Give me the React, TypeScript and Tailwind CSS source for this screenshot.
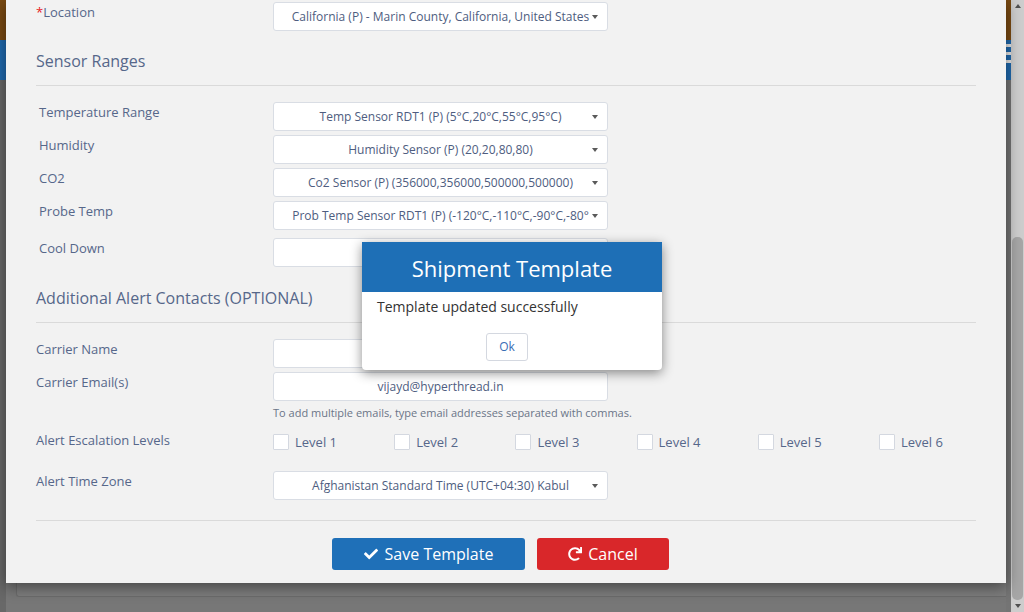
import React from "react";
import { FaCheck, FaRedo } from "react-icons/fa";

const labelCls = "text-[13px] leading-[18px] text-[#56678a]";

function Caret() {
  return (
    <span className="ml-[2px] mr-[9px] h-0 w-0 shrink-0 border-x-[3.5px] border-t-[4px] border-x-transparent border-t-[#5a5a5a]" />
  );
}

function Select({ text }: { text: string }) {
  return (
    <div className="flex h-[29px] w-[335px] shrink-0 items-center rounded-[3px] border border-[#d9dde4] bg-white pl-[17px]">
      <span className="min-w-0 flex-1 overflow-hidden whitespace-nowrap text-center text-[12px] leading-[16px] text-[#4e5d80]">
        {text}
      </span>
      <Caret />
    </div>
  );
}

function Input({ text }: { text?: string }) {
  return (
    <div className="flex h-[29px] w-[335px] shrink-0 items-center justify-center rounded-[3px] border border-[#d9dde4] bg-white text-[12px] text-[#4e5d80]">
      {text}
    </div>
  );
}

function Row({
  label,
  indent,
  className,
  children,
}: {
  label: React.ReactNode;
  indent?: boolean;
  className?: string;
  children: React.ReactNode;
}) {
  return (
    <div className={"flex " + (className ?? "")}>
      <div className={"w-[237px] shrink-0 pt-[1px] " + labelCls + (indent ? " pl-[3px]" : "")}>{label}</div>
      {children}
    </div>
  );
}

function Heading({ children, className }: { children: React.ReactNode; className: string }) {
  return <div className={"text-[16px] leading-[24px] text-[#56678a] " + className}>{children}</div>;
}

export default function App() {
  const levels = ["Level 1", "Level 2", "Level 3", "Level 4", "Level 5", "Level 6"];
  return (
    <div className="relative h-[612px] w-[1024px] overflow-hidden bg-[#777777] font-['Open_Sans',sans-serif]">
      <div className="flex h-[612px]">
        {/* left strip of underlying page */}
        <div className="flex w-[6px] shrink-0 flex-col">
          <div className="h-[40px] bg-[#7a4a12]" />
          <div className="h-[40px] bg-[#1f69ae]" />
          <div className="flex-1 bg-[#686868]" />
        </div>

        {/* modal column */}
        <div className="flex w-[1000px] shrink-0 flex-col">
          <div className="relative z-10 flex h-[583px] flex-col bg-[#f2f2f2] px-[30px] shadow-[0_4px_14px_rgba(0,0,0,0.45)]">
            <Row
              className="mt-[2px]"
              label={
                <span>
                  <span className="text-[#e8201e]">*</span>Location
                </span>
              }
            >
              <Select text="California (P) - Marin County, California, United States" />
            </Row>

            <Heading className="mt-[18px]">Sensor Ranges</Heading>
            <div className="mt-[12px] h-px bg-[#dadada]" />

            <div className="mt-[16px] flex flex-col gap-[4px]">
              <Row indent label="Temperature Range">
                <Select text="Temp Sensor RDT1 (P) (5°C,20°C,55°C,95°C)" />
              </Row>
              <Row indent label="Humidity">
                <Select text="Humidity Sensor (P) (20,20,80,80)" />
              </Row>
              <Row indent label="CO2">
                <Select text="Co2 Sensor (P) (356000,356000,500000,500000)" />
              </Row>
              <Row indent label="Probe Temp">
                <Select text="Prob Temp Sensor RDT1 (P) (-120°C,-110°C,-90°C,-80°" />
              </Row>
            </div>
            <Row indent className="mt-[8px]" label="Cool Down">
              <Input />
            </Row>

            <Heading className="mt-[19px]">Additional Alert Contacts (OPTIONAL)</Heading>
            <div className="mt-[12px] h-px bg-[#dadada]" />

            <div className="mt-[16px] flex flex-col gap-[4px]">
              <Row label="Carrier Name">
                <Input />
              </Row>
              <Row label="Carrier Email(s)">
                <Input text="vijayd@hyperthread.in" />
              </Row>
            </div>
            <div className="ml-[237px] mt-[4px] text-[11px] leading-[16px] text-[#6b7588]">
              To add multiple emails, type email addresses separated with commas.
            </div>

            <div className="mt-[10px] flex">
              <div className={"w-[237px] shrink-0 " + labelCls}>Alert Escalation Levels</div>
              <div className="flex shrink-0 pt-[3px]">
                {levels.map((l) => (
                  <div key={l} className="flex w-[121.2px] shrink-0 items-center gap-[6px]">
                    <div className="h-[16px] w-[16px] rounded-[1px] border border-[#d4d8e0] bg-white" />
                    <span className="text-[13px] leading-[16px] text-[#56678a]">{l}</span>
                  </div>
                ))}
              </div>
            </div>

            <Row className="mt-[21px]" label="Alert Time Zone">
              <Select text="Afghanistan Standard Time (UTC+04:30) Kabul" />
            </Row>

            <div className="mt-[20px] h-px bg-[#dadada]" />

            <div className="mt-[17px] flex gap-[12px] pl-[296px]">
              <div className="flex h-[32px] w-[193px] items-center justify-center gap-[7px] rounded-[3px] bg-[#1f70b8] text-[16px] text-white">
                <FaCheck className="h-[14px] w-[14px]" />
                <span>Save Template</span>
              </div>
              <div className="flex h-[32px] w-[132px] items-center justify-center gap-[6px] rounded-[3px] bg-[#d9272a] text-[16px] text-white">
                <FaRedo className="h-[14px] w-[14px]" />
                <span>Cancel</span>
              </div>
            </div>
          </div>
          {/* underlying page panel below modal */}
          <div className="flex-1">
            <div className="ml-[10px] h-[14px] rounded-bl-[3px] border-b border-l border-[#6c6c6c] bg-[#7d7d7d]" />
          </div>
        </div>

        {/* right strip of underlying page */}
        <div className="flex w-[5px] shrink-0 flex-col">
          <div className="h-[40px] bg-[#7a4a12]" />
          <div className="flex h-[40px] flex-col gap-[5px] bg-[#1f69ae] pt-[4px]">
            <div className="h-[3px] bg-[#e6e6e6]" />
            <div className="h-[3px] bg-[#e6e6e6]" />
            <div className="h-[3px] bg-[#e6e6e6]" />
          </div>
          <div className="flex-1 bg-[#747474]" />
        </div>

        {/* scrollbar */}
        <div className="flex w-[13px] shrink-0 flex-col bg-[#cdcdcd]">
          <div className="flex h-[12px] items-center justify-center">
            <span className="h-0 w-0 border-x-[3.5px] border-b-[4px] border-x-transparent border-b-[#505050]" />
          </div>
          <div className="h-[225px]" />
          <div className="mx-[1px] flex-1 rounded-[5px] bg-[#a6a6a6]" />
          <div className="flex h-[12px] items-center justify-center">
            <span className="h-0 w-0 border-x-[3.5px] border-t-[4px] border-x-transparent border-t-[#505050]" />
          </div>
        </div>
      </div>

      {/* alert dialog */}
      <div className="absolute left-[362px] top-[242px] z-20 w-[300px] rounded-b-[4px] bg-white pb-[9px] shadow-[0_3px_12px_rgba(0,0,0,0.45)]">
        <div className="flex h-[50px] items-center justify-center bg-[#1e6fb6] pt-[3px] text-[22px] text-white">
          Shipment Template
        </div>
        <div className="mt-[5px] pl-[15px] text-[14px] leading-[20px] text-[#333333]">Template updated successfully</div>
        <div className="mt-[16px] flex pl-[124px]">
          <div className="flex h-[28px] w-[42px] items-center justify-center rounded-[3px] border border-[#d4d8e0] bg-white text-[12px] text-[#3a6db5]">
            Ok
          </div>
        </div>
      </div>
    </div>
  );
}
